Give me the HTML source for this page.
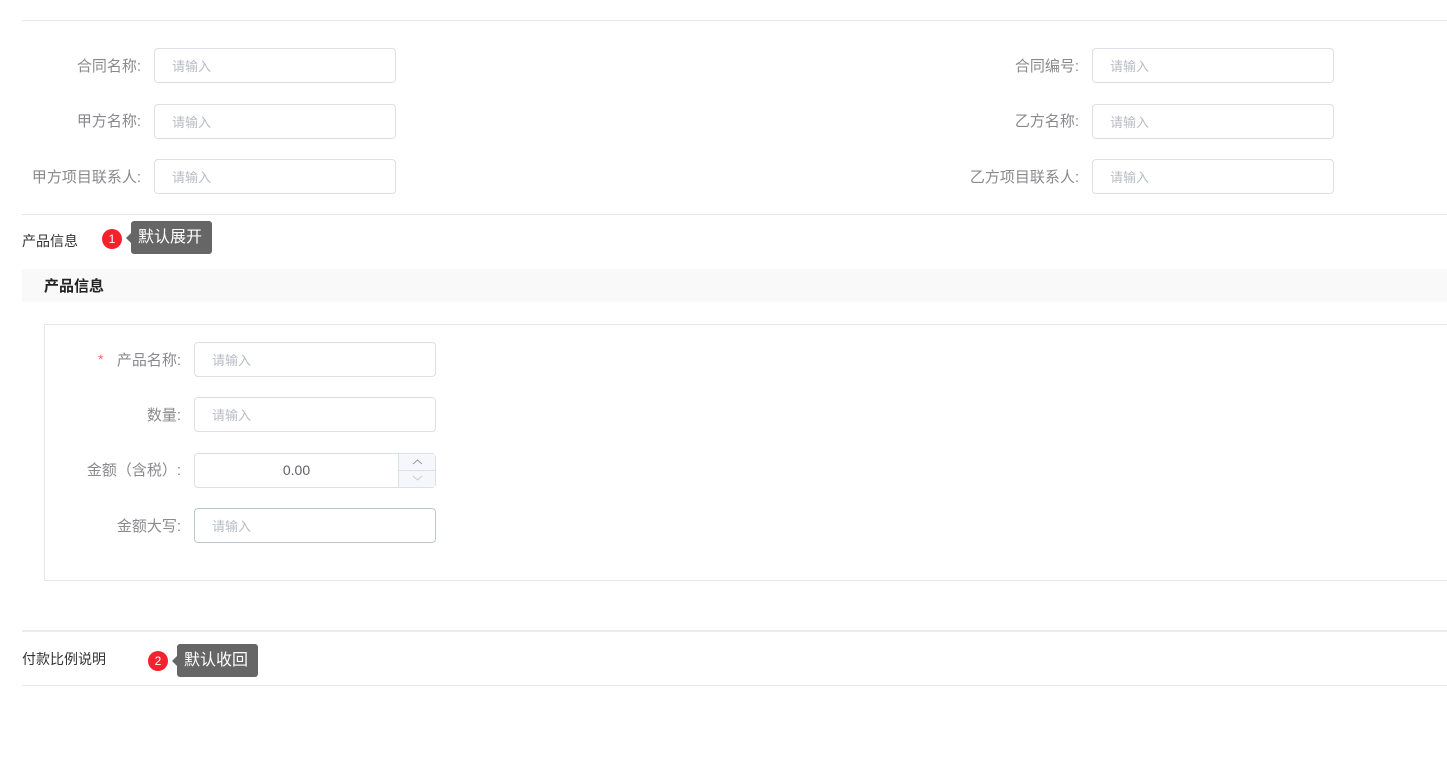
<!DOCTYPE html>
<html><head><meta charset="utf-8"><style>
*{box-sizing:border-box;margin:0;padding:0}
body{width:1447px;height:769px;background:#fff;font-family:"Liberation Sans","Noto Sans CJK SC",sans-serif;position:relative;overflow:hidden;color:#606266}
.a{position:absolute}
.lbl{position:absolute;font-size:15px;color:#8a8a8e;text-align:right;line-height:20px;white-space:nowrap}
.inp{position:absolute;width:242px;height:35px;border:1px solid #dcdfe6;border-radius:4px;font-size:13px;color:#b8bcc4;padding-left:17px;line-height:35px}
.hr{position:absolute;height:1px;background:#e4e7ed;left:22px;right:0}
.badge{position:absolute;width:20px;height:20px;border-radius:50%;background:#f5222d;color:#fff;font-size:12px;text-align:center;line-height:20px}
.tip{position:absolute;height:33px;background:#666;color:#fff;border-radius:3px;font-size:16px;line-height:33px;padding:0 10px 0 7px}
.tip:before{content:"";position:absolute;left:-5px;top:12px;border-right:5px solid #666;border-top:5px solid transparent;border-bottom:5px solid transparent}
</style></head><body>
<div class="hr" style="top:20px"></div>
<div class="lbl" style="right:1306px;top:57px">合同名称:</div>
<div class="inp" style="left:154px;top:48px">请输入</div>
<div class="lbl" style="right:1306px;top:112px">甲方名称:</div>
<div class="inp" style="left:154px;top:104px">请输入</div>
<div class="lbl" style="right:1306px;top:168px">甲方项目联系人:</div>
<div class="inp" style="left:154px;top:159px">请输入</div>
<div class="lbl" style="right:368px;top:57px">合同编号:</div>
<div class="inp" style="left:1092px;top:48px">请输入</div>
<div class="lbl" style="right:368px;top:112px">乙方名称:</div>
<div class="inp" style="left:1092px;top:104px">请输入</div>
<div class="lbl" style="right:368px;top:168px">乙方项目联系人:</div>
<div class="inp" style="left:1092px;top:159px">请输入</div>
<div class="hr" style="top:214px"></div>
<div class="a" style="left:22px;top:231px;font-size:14px;color:#333">产品信息</div>
<div class="badge" style="left:102px;top:229px">1</div>
<div class="tip" style="left:131px;top:221px">默认展开</div>
<div class="a" style="left:22px;top:269px;right:0;height:33px;background:#f9f9f9"></div>
<div class="a" style="left:44px;top:275px;font-size:15px;font-weight:bold;color:#222">产品信息</div>
<div class="a" style="left:44px;top:324px;right:-2px;height:257px;border:1px solid #e4e7ed"></div>
<div class="a" style="left:98px;top:351px;color:#f56c6c;font-size:14px">*</div>
<div class="lbl" style="right:1266px;top:351px">产品名称:</div>
<div class="inp" style="left:194px;top:342px">请输入</div>
<div class="lbl" style="right:1266px;top:406px">数量:</div>
<div class="inp" style="left:194px;top:397px">请输入</div>
<div class="lbl" style="right:1266px;top:461px">金额（含税）:</div>
<div class="inp" style="left:194px;top:453px;padding:0;color:#606266;font-size:14px">
<div style="position:absolute;left:0;width:203px;text-align:center;line-height:33px">0.00</div>
<div style="position:absolute;left:203px;top:0;width:37px;height:33px;border-left:1px solid #dcdfe6;background:#f5f7fa">
<div style="height:17px;border-bottom:1px solid #dcdfe6"><svg width="37" height="16" style="display:block"><path d="M14 10 L18.5 6 L23 10" fill="none" stroke="#999" stroke-width="1"/></svg></div>
<div><svg width="37" height="15" style="display:block"><path d="M14 5 L18.5 9 L23 5" fill="none" stroke="#ccc" stroke-width="1"/></svg></div></div></div>
<div class="lbl" style="right:1266px;top:517px">金额大写:</div>
<div class="inp" style="left:194px;top:508px;border-color:#c0c4cc">请输入</div>
<div class="a" style="left:22px;right:0;top:630px;height:2px;background:#e9ebef"></div>
<div class="a" style="left:22px;top:649px;font-size:14px;color:#333">付款比例说明</div>
<div class="badge" style="left:148px;top:651px">2</div>
<div class="tip" style="left:177px;top:644px">默认收回</div>
<div class="hr" style="top:685px"></div>
</body></html>
